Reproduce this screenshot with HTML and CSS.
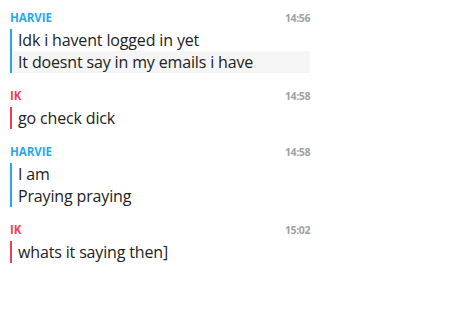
FILE: index.html
```html
<!DOCTYPE html>
<html>
<head>
<meta charset="utf-8">
<link rel="stylesheet" href="styles.css">
</head>
<body>
<div class="chat">
  <div class="msg harvie">
    <div class="head"><span class="name">HARVIE</span><span class="time">14:56</span></div>
    <div class="body">
      <div class="line">Idk i havent logged in yet</div>
      <div class="line hl">It doesnt say in my emails i have</div>
    </div>
  </div>
  <div class="msg ik">
    <div class="head"><span class="name">IK</span><span class="time">14:58</span></div>
    <div class="body">
      <div class="line">go check dick</div>
    </div>
  </div>
  <div class="msg harvie">
    <div class="head"><span class="name">HARVIE</span><span class="time">14:58</span></div>
    <div class="body">
      <div class="line">I am</div>
      <div class="line">Praying praying</div>
    </div>
  </div>
  <div class="msg ik">
    <div class="head"><span class="name">IK</span><span class="time">15:02</span></div>
    <div class="body">
      <div class="line">whats it saying then]</div>
    </div>
  </div>
</div>
</body>
</html>
```
FILE: styles.css
```css
html, body {
  margin: 0;
  padding: 0;
  background: #ffffff;
}
.chat {
  width: 300px;
  padding: 10px 0 0 10px;
  font-family: "Open Sans", "Liberation Sans", sans-serif;
}
.msg {
  margin-bottom: 15px;
}
.head {
  display: flex;
  justify-content: space-between;
  align-items: baseline;
  font-weight: 700;
  line-height: 15px;
  height: 15px;
  margin-bottom: 4px;
}
.name {
  font-size: 11.5px;
}
.time {
  font-size: 10.5px;
  color: #9ea1a7;
  letter-spacing: -0.4px;
}
.harvie .name { color: #1eaaf2; }
.ik .name { color: #f23c57; }
.body {
  border-left: 2px solid;
}
.harvie .body { border-color: #1eaaf2; }
.ik .body { border-color: #f23c57; }
.line {
  padding-left: 6px;
  font-size: 16px;
  line-height: 22px;
  letter-spacing: -0.15px;
  color: #222222;
}
.hl {
  background: #f5f5f5;
}
```
